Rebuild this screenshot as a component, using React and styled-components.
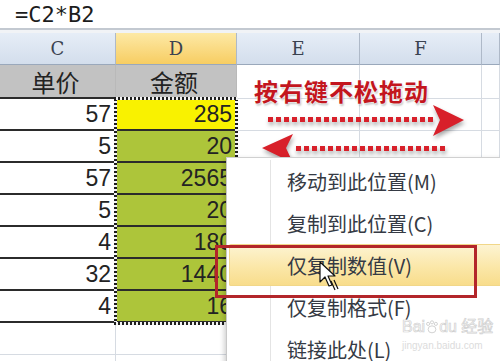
import styled, { createGlobalStyle } from "styled-components";

const GlobalStyle = createGlobalStyle`
    html, body { margin: 0; padding: 0; background: #fff; }
    * { box-sizing: border-box; }
`;

const CJK = `"Noto Sans CJK SC", "Liberation Sans", sans-serif`;

const Page = styled.div`
    position: relative;
    width: 500px;
    height: 361px;
    overflow: hidden;
    background: #fff;
    font-family: "Liberation Sans", ${CJK};
`;

const FormulaBar = styled.div`
    height: 30px;
    padding-left: 15px;
    border-bottom: 2px solid #c3c9d1;
    font-family: "DejaVu Sans Mono", monospace;
    font-size: 22px;
    line-height: 29px;
    color: #1c1c1c;
`;

const Spacer = styled.div`
    height: 3px;
    background: #f1f3f6;
`;

const Sheet = styled.div`
    display: grid;
    grid-template-columns: 116px 121px 123px 122px 18px;
    grid-template-rows: 32px 34px;
    grid-auto-rows: 32px;
`;

const ColHead = styled.div`
    display: flex;
    align-items: center;
    justify-content: center;
    font-family: "DejaVu Serif", "Liberation Serif", serif;
    font-size: 18px;
    color: #3a4250;
    border-right: 1px solid #aeb9c8;
    border-bottom: 1px solid #9aa8bb;
    background: ${p => p.$active
        ? "linear-gradient(#fde9a6, #f7cd62)"
        : "linear-gradient(#e6edf7, #d3deec)"};
`;

const Cell = styled.div`
    display: flex;
    align-items: center;
    justify-content: ${p => (p.$center ? "center" : "flex-end")};
    padding-right: 4px;
    font-size: ${p => (p.$center ? "24px" : "23px")};
    font-family: ${p => (p.$center ? CJK : `"Liberation Sans", sans-serif`)};
    color: #232323;
    background: ${p => p.$bg || "#fff"};
    border-right: 1px solid ${p => (p.$dark ? "#b9b9b9" : "#d6dbe2")};
    border-bottom: ${p => (p.$dark ? "2px solid #2b2b2b" : "1px solid #d6dbe2")};
    white-space: nowrap;
    overflow: hidden;
`;

const Selection = styled.div`
    position: absolute;
    left: 114px;
    top: 97px;
    width: 124px;
    height: 228px;
    pointer-events: none;
    background:
        repeating-linear-gradient(90deg, #1e1e1e 0 2px, #f4f4f4 2px 4px) top / 100% 3px no-repeat,
        repeating-linear-gradient(90deg, #1e1e1e 0 2px, #f4f4f4 2px 4px) bottom / 100% 3px no-repeat,
        repeating-linear-gradient(0deg, #1e1e1e 0 2px, #f4f4f4 2px 4px) left / 3px 100% no-repeat,
        repeating-linear-gradient(0deg, #1e1e1e 0 2px, #f4f4f4 2px 4px) right / 3px 100% no-repeat;
`;

const Note = styled.div`
    position: absolute;
    left: 254px;
    top: 73px;
    font-family: ${CJK};
    font-size: 24px;
    font-weight: 700;
    letter-spacing: 1px;
    color: #c3161e;
    text-shadow: 0 0 2px #fff, 0 0 2px #fff, 1px 2px 2px rgba(0, 0, 0, 0.25);
`;

const Arrows = styled.svg`
    position: absolute;
    left: 255px;
    top: 100px;
    filter: drop-shadow(1px 3px 2px rgba(0, 0, 0, 0.35));
`;

const Menu = styled.div`
    position: absolute;
    left: 226px;
    top: 157px;
    right: -10px;
    bottom: -20px;
    padding-top: 2px;
    background: #fff;
    border-left: 1px solid #c8c8c8;
    border-top: 1px solid #d0d0d0;
    box-shadow: -2px 2px 5px rgba(0, 0, 0, 0.18);
`;

const MenuItem = styled.div`
    display: flex;
    align-items: center;
    height: 42px;
    margin-left: 2px;
    border-radius: 2px;
    background: ${p => p.$active ? "linear-gradient(#fdf4d4, #fbe7a8 55%, #f8dc8a)" : "transparent"};
    box-shadow: ${p => p.$active ? "inset 0 0 0 1px #f1d789" : "none"};
`;

const Gutter = styled.div`
    align-self: stretch;
    width: 42px;
    border-right: 1px solid ${p => (p.$active ? "transparent" : "#e4e4e4")};
`;

const Label = styled.span`
    margin-left: 16px;
    font-family: ${CJK};
    font-size: 20px;
    color: #353a44;
    white-space: nowrap;
`;

const Mark = styled.div`
    position: absolute;
    left: 215px;
    top: 245px;
    width: 262px;
    height: 53px;
    border: 3px solid #b3262a;
`;

const Cursor = styled.svg`
    position: absolute;
    left: 319px;
    top: 261px;
`;

const Watermark = styled.div`
    position: absolute;
    left: 402px;
    top: 318px;
    display: flex;
    align-items: center;
    white-space: nowrap;
    color: rgba(255, 255, 255, 0.4);
    -webkit-text-stroke: 0.7px #d0d0d0;
    font-family: "Liberation Sans", ${CJK};
    font-size: 16px;
    line-height: 18px;
`;

const WatermarkUrl = styled.div`
    position: absolute;
    left: 402px;
    top: 340px;
    color: #dcdcdc;
    font-family: "Liberation Sans", sans-serif;
    font-size: 10px;
    white-space: nowrap;
`;

const rows = [
    { c: 57, d: 285, bg: "#f9f200" },
    { c: 5, d: 20 },
    { c: 57, d: 2565 },
    { c: 5, d: 20 },
    { c: 4, d: 180 },
    { c: 32, d: 1440 },
    { c: 4, d: 16 },
];

const menu = ["移动到此位置(M)", "复制到此位置(C)", "仅复制数值(V)", "仅复制格式(F)", "链接此处(L)"];

const GREEN = "#adc53a";

function Squares({ x, y, count }) {
    return Array.from({ length: count }, (_, i) => (
        <rect key={i} x={x + i * 8} y={y} width="5" height="5" />
    ));
}

export default function App() {
    return (
        <Page>
            <GlobalStyle />
            <FormulaBar>=C2*B2</FormulaBar>
            <Spacer />
            <Sheet>
                {["C", "D", "E", "F", ""].map(l => (
                    <ColHead key={l} $active={l === "D"}>{l}</ColHead>
                ))}

                <Cell $center $dark $bg="#c2c2c2">单价</Cell>
                <Cell $center $dark $bg="#c2c2c2">金额</Cell>
                <Cell /><Cell /><Cell />

                {rows.map((r, i) => [
                    <Cell key={"c" + i} $dark>{r.c}</Cell>,
                    <Cell key={"d" + i} $dark $bg={r.bg || GREEN}>{r.d}</Cell>,
                    <Cell key={"e" + i} />,
                    <Cell key={"f" + i} />,
                    <Cell key={"g" + i} />,
                ])}

                {Array.from({ length: 10 }, (_, i) => <Cell key={"x" + i} />)}
            </Sheet>

            <Selection />

            <Note>按右键不松拖动</Note>
            <Arrows width="215" height="70" viewBox="0 0 215 70">
                <g fill="#d8202a">
                    <Squares x={13} y={17} count={21} />
                    <path d="M178 5 L209 20 L178 36 L185 20 Z" />
                    <Squares x={41} y={46} count={19} />
                    <path d="M38 34 L7 48 L38 63 L31 48 Z" />
                </g>
            </Arrows>

            <Menu>
                {menu.map((m, i) => (
                    <MenuItem key={m} $active={i === 2}>
                        <Gutter $active={i === 2} />
                        <Label>{m}</Label>
                    </MenuItem>
                ))}
            </Menu>

            <Mark />

            <Cursor width="22" height="32" viewBox="0 0 22 32">
                <path d="M1 1 L1 21 L6 16 L10 25 L13 24 L9 15 L16 15 Z"
                    fill="#fff" stroke="#111" strokeWidth="1.2" strokeLinejoin="round" />
                <path d="M12 20 L16 29 M15 19 L19 28" stroke="#111" strokeWidth="1.2" />
            </Cursor>

            <Watermark>
                <span>Bai</span>
                <svg width="14" height="16" viewBox="0 0 18 18">
                    <g fill="none" stroke="#cfcfcf" strokeWidth="1.2">
                        <ellipse cx="9" cy="12" rx="5" ry="4.5" />
                        <circle cx="4" cy="5" r="2" />
                        <circle cx="9" cy="3" r="2" />
                        <circle cx="14" cy="5" r="2" />
                    </g>
                </svg>
                <span>du 经验</span>
            </Watermark>
            <WatermarkUrl>jingyan.baidu.com</WatermarkUrl>
        </Page>
    );
}
